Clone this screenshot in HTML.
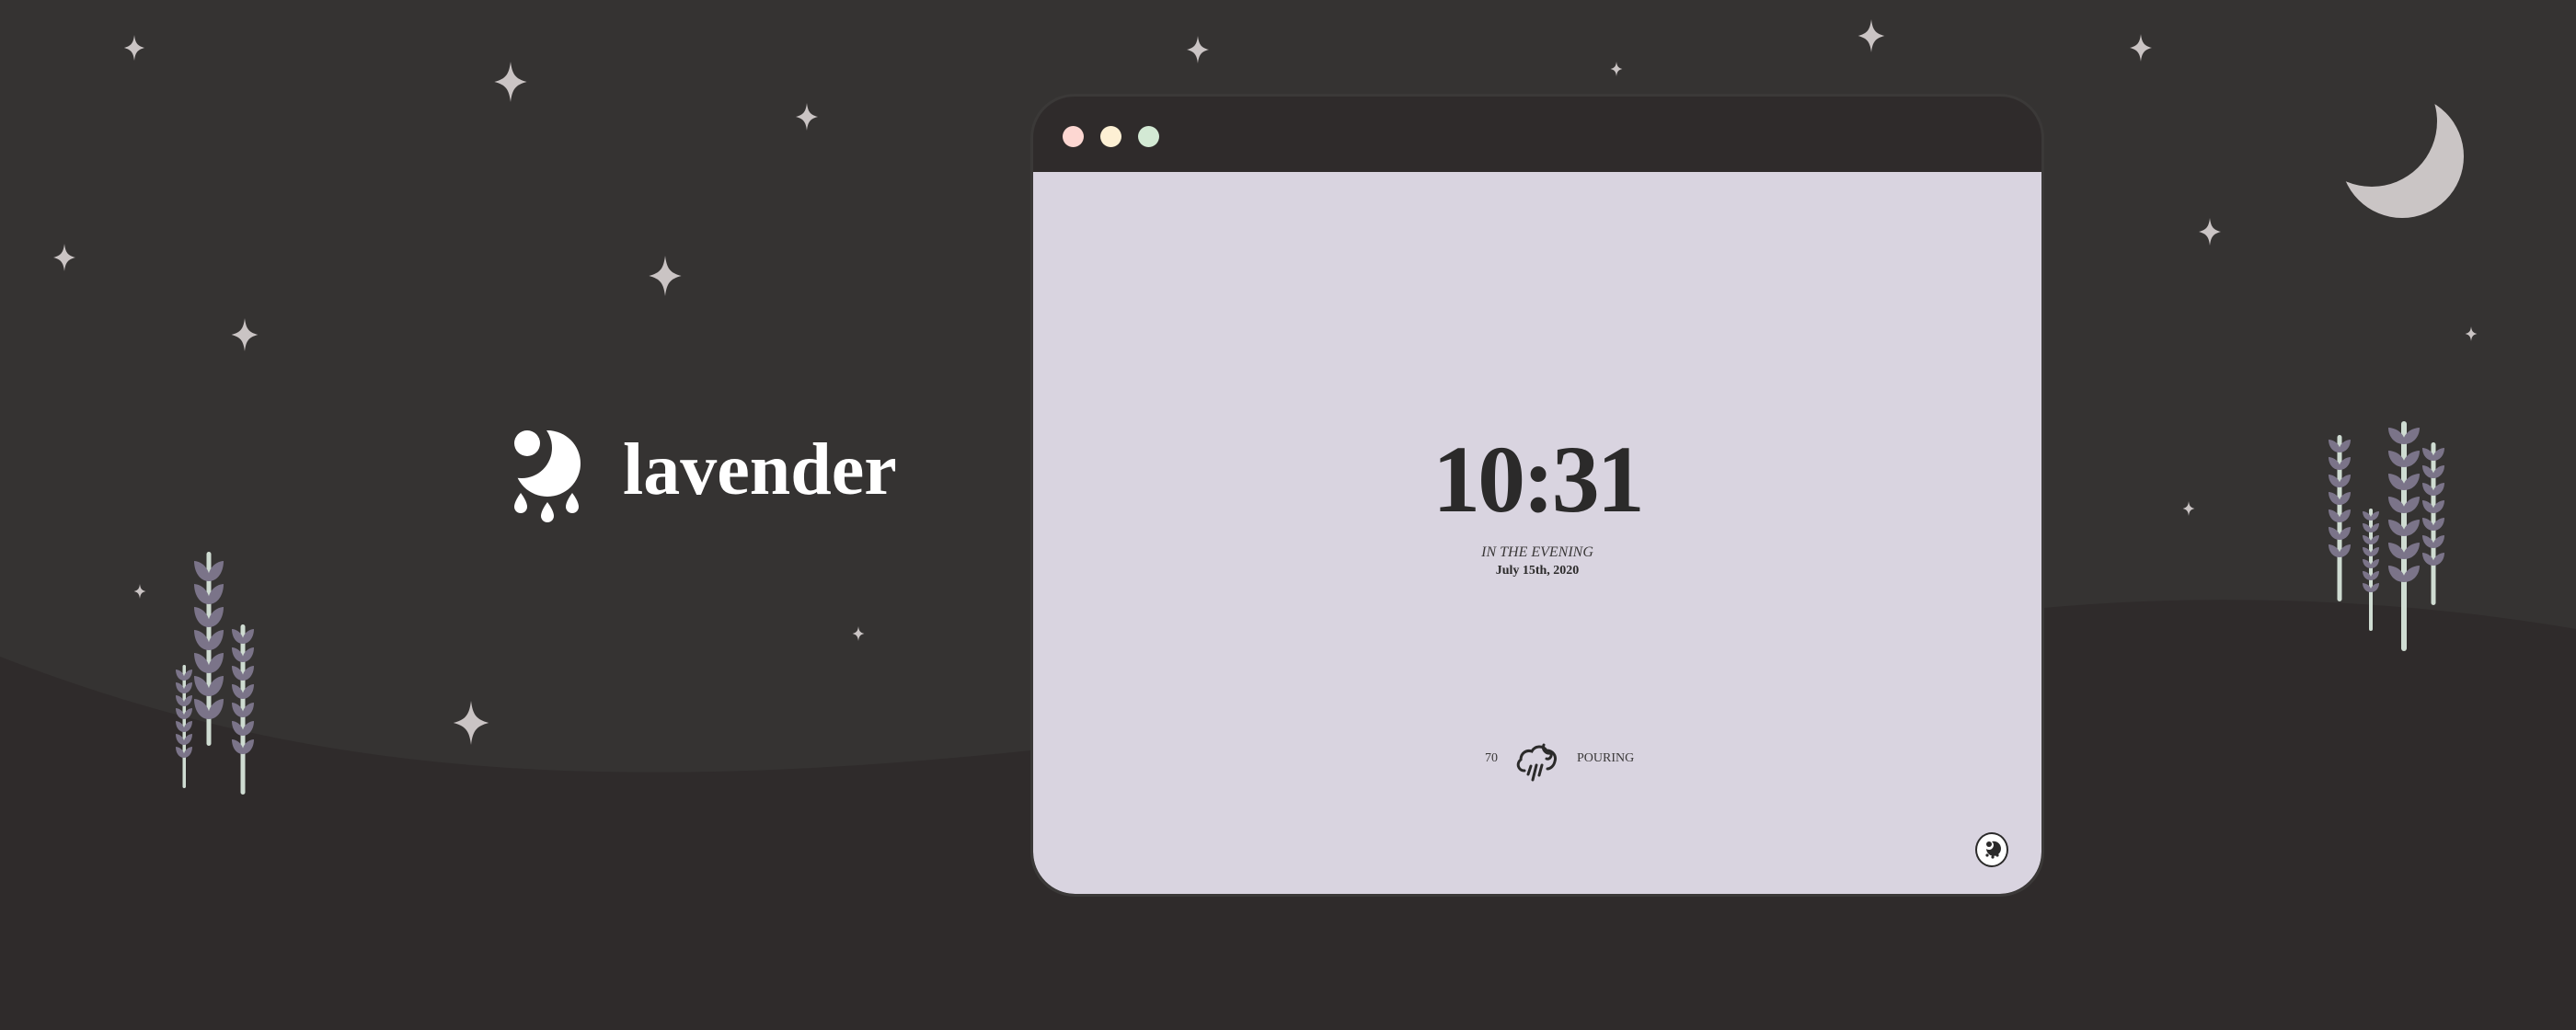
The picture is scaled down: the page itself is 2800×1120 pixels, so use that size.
<!DOCTYPE html>
<html><head><meta charset="utf-8"><style>
html,body{margin:0;padding:0}
body{width:2800px;height:1120px;overflow:hidden;background:#353332;position:relative;font-family:"Liberation Serif",serif}
.abs{position:absolute}
</style></head><body>
<svg class="abs" style="left:0;top:0" width="2800" height="1120" viewBox="0 0 2800 1120">
<defs>
<path id="st" d="M0,-1 C0.08,-0.35 0.25,-0.15 0.8,0 C0.25,0.15 0.08,0.35 0,1 C-0.08,0.35 -0.25,0.15 -0.8,0 C-0.25,-0.15 -0.08,-0.35 0,-1Z" fill="#cac4c4"/>
<path id="lp" d="M0,0 C-0.6,0 -1,-0.45 -1,-1 C-0.55,-0.98 -0.15,-0.75 0,-0.4 C0.15,-0.75 0.55,-0.98 1,-1 C1,-0.45 0.6,0 0,0Z" fill="#7b7489"/>
<mask id="mm"><rect width="2800" height="1120" fill="#000"/><circle cx="2611" cy="170" r="67" fill="#fff"/><circle cx="2578" cy="132" r="71" fill="#000"/></mask>
<mask id="lm"><rect width="2800" height="1120" fill="#000"/><circle cx="595" cy="504" r="36" fill="#fff"/><circle cx="567" cy="487" r="33" fill="#000"/></mask>
</defs>
<path d="M0,714 C300,830 600,870 1120,816 L1200,700 L2221,661 C2400,645 2600,650 2800,684 L2800,1120 L0,1120Z" fill="#2f2b2b"/>
<g>
<use href="#st" transform="translate(146,52) scale(14)"/>
<use href="#st" transform="translate(555,89) scale(22)"/>
<use href="#st" transform="translate(877,127) scale(15)"/>
<use href="#st" transform="translate(70,280) scale(15)"/>
<use href="#st" transform="translate(723,300) scale(22)"/>
<use href="#st" transform="translate(266,364) scale(18)"/>
<use href="#st" transform="translate(1302,54) scale(15)"/>
<use href="#st" transform="translate(1757,75) scale(8)"/>
<use href="#st" transform="translate(2034,39) scale(18)"/>
<use href="#st" transform="translate(2327,52) scale(15)"/>
<use href="#st" transform="translate(2402,252) scale(15)"/>
<use href="#st" transform="translate(2686,363) scale(8)"/>
<use href="#st" transform="translate(2379,553) scale(8)"/>
<use href="#st" transform="translate(152,643) scale(8)"/>
<use href="#st" transform="translate(933,689) scale(8)"/>
<use href="#st" transform="translate(512,786) scale(24)"/>
</g>
<rect width="2800" height="1120" fill="#cac5c5" mask="url(#mm)"/>
<g>
<rect x="224.5" y="600" width="5" height="211" rx="2.5" fill="#cfdcd2"/>
<g transform="translate(227,0)">
<use href="#lp" transform="translate(0,632) scale(16,22)"/><use href="#lp" transform="translate(0,657) scale(16,22)"/><use href="#lp" transform="translate(0,682) scale(16,22)"/><use href="#lp" transform="translate(0,707) scale(16,22)"/><use href="#lp" transform="translate(0,732) scale(16,22)"/><use href="#lp" transform="translate(0,757) scale(16,22)"/><use href="#lp" transform="translate(0,782) scale(16,22)"/>
</g>
<rect x="261.5" y="679" width="5" height="185" rx="2.5" fill="#cfdcd2"/>
<g transform="translate(264,0)">
<use href="#lp" transform="translate(0,700) scale(12,16)"/><use href="#lp" transform="translate(0,720) scale(12,16)"/><use href="#lp" transform="translate(0,740) scale(12,16)"/><use href="#lp" transform="translate(0,760) scale(12,16)"/><use href="#lp" transform="translate(0,780) scale(12,16)"/><use href="#lp" transform="translate(0,800) scale(12,16)"/><use href="#lp" transform="translate(0,820) scale(12,16)"/>
</g>
<rect x="198.5" y="723" width="3.5" height="134" rx="1.7" fill="#cfdcd2"/>
<g transform="translate(200,0)">
<use href="#lp" transform="translate(0,740) scale(9,12)"/><use href="#lp" transform="translate(0,754) scale(9,12)"/><use href="#lp" transform="translate(0,768) scale(9,12)"/><use href="#lp" transform="translate(0,782) scale(9,12)"/><use href="#lp" transform="translate(0,796) scale(9,12)"/><use href="#lp" transform="translate(0,810) scale(9,12)"/><use href="#lp" transform="translate(0,824) scale(9,12)"/>
</g>
</g>
<g>
<rect x="2540.5" y="473" width="5" height="181" rx="2.5" fill="#cfdcd2"/>
<g transform="translate(2543,0)">
<use href="#lp" transform="translate(0,492) scale(12,14)"/><use href="#lp" transform="translate(0,511) scale(12,14)"/><use href="#lp" transform="translate(0,530) scale(12,14)"/><use href="#lp" transform="translate(0,549) scale(12,14)"/><use href="#lp" transform="translate(0,568) scale(12,14)"/><use href="#lp" transform="translate(0,587) scale(12,14)"/><use href="#lp" transform="translate(0,606) scale(12,14)"/>
</g>
<rect x="2575" y="553" width="4" height="133" rx="2" fill="#cfdcd2"/>
<g transform="translate(2577,0)">
<use href="#lp" transform="translate(0,566) scale(9,10)"/><use href="#lp" transform="translate(0,579) scale(9,10)"/><use href="#lp" transform="translate(0,592) scale(9,10)"/><use href="#lp" transform="translate(0,605) scale(9,10)"/><use href="#lp" transform="translate(0,618) scale(9,10)"/><use href="#lp" transform="translate(0,631) scale(9,10)"/><use href="#lp" transform="translate(0,644) scale(9,10)"/>
</g>
<rect x="2610" y="458" width="6" height="250" rx="3" fill="#cfdcd2"/>
<g transform="translate(2613,0)">
<use href="#lp" transform="translate(0,483) scale(17,18)"/><use href="#lp" transform="translate(0,508) scale(17,18)"/><use href="#lp" transform="translate(0,533) scale(17,18)"/><use href="#lp" transform="translate(0,558) scale(17,18)"/><use href="#lp" transform="translate(0,583) scale(17,18)"/><use href="#lp" transform="translate(0,608) scale(17,18)"/><use href="#lp" transform="translate(0,633) scale(17,18)"/>
</g>
<rect x="2642.5" y="481" width="5" height="177" rx="2.5" fill="#cfdcd2"/>
<g transform="translate(2645,0)">
<use href="#lp" transform="translate(0,501) scale(12,14)"/><use href="#lp" transform="translate(0,520) scale(12,14)"/><use href="#lp" transform="translate(0,539) scale(12,14)"/><use href="#lp" transform="translate(0,558) scale(12,14)"/><use href="#lp" transform="translate(0,577) scale(12,14)"/><use href="#lp" transform="translate(0,596) scale(12,14)"/><use href="#lp" transform="translate(0,615) scale(12,14)"/>
</g>
</g>
<rect width="2800" height="1120" fill="#fff" mask="url(#lm)"/>
<g fill="#fff">
<circle cx="573" cy="482" r="14"/>
<path d="M566,536 C560,544 559,549 559,551 A7,7 0 0 0 573,551 C573,549 572,544 566,536Z"/>
<path d="M595,546 C589,554 588,559 588,561 A7,7 0 0 0 602,561 C602,559 601,554 595,546Z"/>
<path d="M622,536 C616,544 615,549 615,551 A7,7 0 0 0 629,551 C629,549 628,544 622,536Z"/>
</g>
<text x="677" y="537" font-family="Liberation Serif" font-weight="bold" font-size="80" fill="#fff">lavender</text>
</svg>

<div class="abs" style="left:1120px;top:102px;width:1096px;height:867px;background:#2f2b2b;border:3px solid #3b3938;border-radius:48px;overflow:hidden">
  <div class="abs" style="left:32px;top:32px;width:23px;height:23px;border-radius:50%;background:#fdd7d2"></div>
  <div class="abs" style="left:73px;top:32px;width:23px;height:23px;border-radius:50%;background:#fdf0d4"></div>
  <div class="abs" style="left:114px;top:32px;width:23px;height:23px;border-radius:50%;background:#d3e9d4"></div>
  <div class="abs" style="left:0;top:82px;right:0;bottom:0;background:#d9d4e0;border-radius:0 0 46px 46px">
    <div class="abs" style="left:0;right:0;top:282px;text-align:center;font-weight:bold;font-size:104px;line-height:106px;color:#2b2a2a;letter-spacing:-3px">10:31</div>
    <div class="abs" style="left:0;right:0;top:405px;text-align:center;font-style:italic;font-size:16px;color:#3a3838">IN THE EVENING</div>
    <div class="abs" style="left:0;right:0;top:426px;text-align:center;font-weight:bold;font-size:14px;color:#2b2a2a">July 15th, 2020</div>
    <div class="abs" style="left:491px;top:630px;font-size:14px;color:#3a3838">70</div>
    <svg class="abs" style="left:524px;top:619px" width="48" height="46" viewBox="0 0 48 46" fill="none" stroke="#2b2a2a" stroke-width="3" stroke-linecap="round">
      <path d="M10,32 C3,32 1,24 6,20 C6,13 12,9 18,11 C21,5 30,4 34,10 C41,10 45,16 43,22 C42,27 38,30 35,30"/>
      <path d="M31,4 C29,9 33,14 39,13 C40,17 37,20 34,19"/>
      <line x1="17" y1="27" x2="14" y2="36"/><line x1="23" y1="26" x2="19" y2="42"/><line x1="29" y1="26" x2="26" y2="37"/>
    </svg>
    <div class="abs" style="left:591px;top:630px;font-size:14px;color:#3a3838">POURING</div>
    <div class="abs" style="left:1024px;top:718px;width:32px;height:34px;border-radius:50%;background:#fff;border:2px solid #2b2a2a"></div>
    <svg class="abs" style="left:1027px;top:722px" width="30" height="30" viewBox="0 0 30 30" fill="#2b2a2a">
      <path d="M15,6 A8,8 0 1 1 9,14 A5,5 0 0 0 15,6Z"/><circle cx="12" cy="9" r="3"/>
      <circle cx="10" cy="21" r="1.6"/><circle cx="16" cy="23" r="1.6"/><circle cx="21" cy="21" r="1.6"/>
    </svg>
  </div>
</div>
</body></html>
